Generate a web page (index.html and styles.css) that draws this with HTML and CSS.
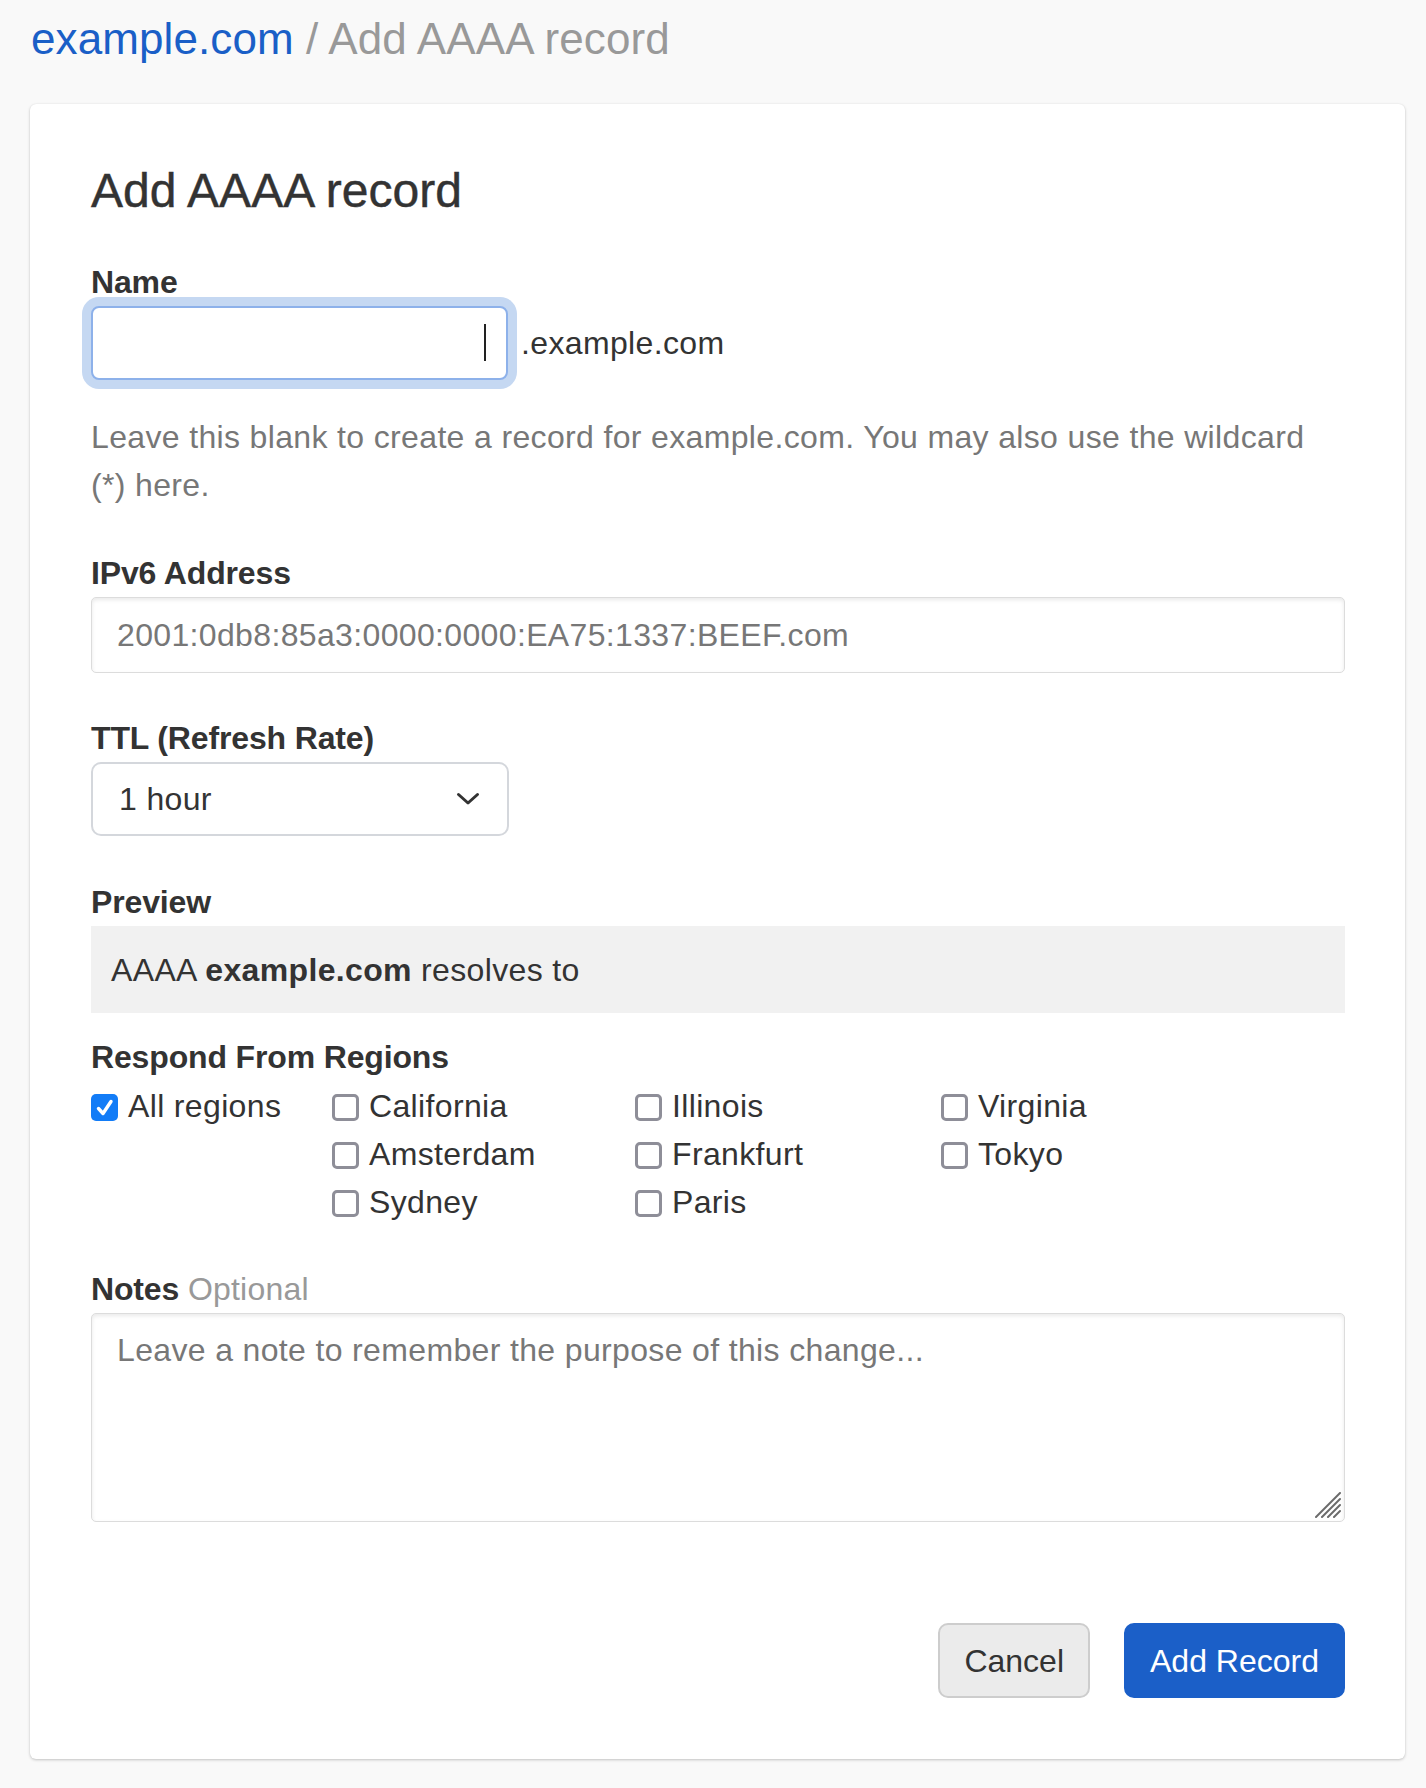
FILE: index.html
```html
<!DOCTYPE html>
<html lang="en">
<head>
<meta charset="utf-8">
<title>Add AAAA record</title>
<link rel="stylesheet" href="styles.css">
</head>
<body>
  <nav class="crumbs">
    <a class="crumb-link" href="#">example.com</a>
    <span class="crumb-rest">/ Add AAAA record</span>
  </nav>

  <main class="card">
    <h1 class="card-title">Add AAAA record</h1>

    <div class="field field-name">
      <label class="field-label" for="name">Name</label>
      <div class="name-row">
        <div class="name-input-wrap">
          <input id="name" class="input input-focus" type="text">
          <span class="caret"></span>
        </div>
        <span class="name-suffix">.example.com</span>
      </div>
      <p class="help">Leave this blank to create a record for example.com. You may also use the wildcard (*) here.</p>
    </div>

    <div class="field field-ip">
      <label class="field-label" for="ip">IPv6 Address</label>
      <input id="ip" class="input input-plain" type="text" placeholder="2001:0db8:85a3:0000:0000:EA75:1337:BEEF.com">
    </div>

    <div class="field field-ttl">
      <label class="field-label" for="ttl">TTL (Refresh Rate)</label>
      <div class="select-wrap">
        <select id="ttl" class="select">
          <option>1 hour</option>
        </select>
        <svg class="chevron" width="24" height="14" viewBox="0 0 24 14" aria-hidden="true">
          <path d="M2.5 2.5 L12 11 L21.5 2.5" fill="none" stroke="#333" stroke-width="3" stroke-linecap="round" stroke-linejoin="round"/>
        </svg>
      </div>
    </div>

    <div class="field field-preview">
      <div class="field-label">Preview</div>
      <div class="preview">AAAA <strong>example.com</strong> resolves to</div>
    </div>

    <div class="field field-regions">
      <div class="field-label">Respond From Regions</div>
      <div class="regions">
        <label class="region region-all">
          <span class="box box-checked">
            <svg width="27" height="27" viewBox="0 0 27 27" aria-hidden="true">
              <path d="M7.5 14.5 L12 19.5 L20 7.5" fill="none" stroke="#fff" stroke-width="3.4" stroke-linecap="round" stroke-linejoin="round"/>
            </svg>
          </span>
          All regions
        </label>
        <div class="region-grid">
          <label class="region"><span class="box"></span>California</label>
          <label class="region"><span class="box"></span>Illinois</label>
          <label class="region"><span class="box"></span>Virginia</label>
          <label class="region"><span class="box"></span>Amsterdam</label>
          <label class="region"><span class="box"></span>Frankfurt</label>
          <label class="region"><span class="box"></span>Tokyo</label>
          <label class="region"><span class="box"></span>Sydney</label>
          <label class="region"><span class="box"></span>Paris</label>
        </div>
      </div>
    </div>

    <div class="field field-notes">
      <label class="field-label" for="notes">Notes <span class="optional">Optional</span></label>
      <div class="textarea-wrap">
        <textarea id="notes" class="textarea" placeholder="Leave a note to remember the purpose of this change..."></textarea>
        <svg class="resizer" width="26" height="26" viewBox="0 0 26 26" aria-hidden="true">
          <g stroke="#6b6b6b" stroke-width="2" stroke-linecap="round">
            <line x1="1" y1="25" x2="25" y2="1"/>
            <line x1="7" y1="25" x2="25" y2="7"/>
            <line x1="13" y1="25" x2="25" y2="13"/>
            <line x1="19" y1="25" x2="25" y2="19"/>
          </g>
        </svg>
      </div>
    </div>

    <div class="actions">
      <button class="btn btn-cancel" type="button">Cancel</button>
      <button class="btn btn-primary" type="button">Add Record</button>
    </div>
  </main>
</body>
</html>
```

FILE: styles.css
```css
* {
  box-sizing: border-box;
}

body {
  margin: 0;
  padding: 12px 21px 29px 30px;
  background: #f9f9f9;
  font-family: "Liberation Sans", Arial, Helvetica, sans-serif;
  font-size: 32px;
  line-height: 48px;
  letter-spacing: 0.35px;
  color: #333;
}

.crumbs {
  font-size: 44px;
  line-height: 53px;
  letter-spacing: 0.1px;
  margin: 0 0 39px;
  padding-left: 1px;
}

.crumb-link {
  color: #1a5fc7;
  text-decoration: none;
}

.crumb-rest {
  color: #999;
}

.card {
  background: #fff;
  border-radius: 6px;
  box-shadow: 0 1px 3px rgba(0, 0, 0, 0.22), 0 0 1px rgba(0, 0, 0, 0.08);
  padding: 58px 60px 61px 61px;
}

.card-title {
  margin: 0;
  font-size: 48px;
  line-height: 58px;
  font-weight: 400;
  letter-spacing: 0;
  color: #333;
  -webkit-text-stroke: 0.45px #333;
}

.field {
  margin-top: 40px;
}

.field-name {
  margin-top: 38px;
}

.field-ttl {
  margin-top: 41px;
}

.field-preview {
  margin-top: 42px;
}

.field-regions {
  margin-top: 20px;
}

.field-notes {
  margin-top: 39px;
}

.field-label {
  display: block;
  font-weight: 700;
  line-height: 48px;
  letter-spacing: -0.15px;
  color: #333;
}

.optional {
  font-weight: 400;
  letter-spacing: 0.2px;
  color: #999;
}

.name-row {
  display: flex;
  align-items: center;
}

.name-input-wrap {
  position: relative;
  width: 417px;
  flex: none;
}

.input {
  display: block;
  width: 100%;
  font: inherit;
  letter-spacing: inherit;
  color: #333;
  background: #fff;
  outline: none;
}

.input-focus {
  height: 74px;
  border: 2px solid #8db1ea;
  border-radius: 8px;
  box-shadow: 0 0 0 9px #c5d8f2;
  padding: 0 24px;
}

.caret {
  position: absolute;
  left: 393px;
  top: 18px;
  width: 2px;
  height: 37px;
  background: #222;
}

.name-suffix {
  margin-left: 13px;
  color: #333;
}

.help {
  margin: 33px 0 0;
  color: #777;
}

.input-plain {
  height: 76px;
  border: 1px solid #dcdcdc;
  border-radius: 5px;
  box-shadow: inset 0 2px 4px rgba(0, 0, 0, 0.09);
  padding: 0 25px;
}

.input-plain::placeholder,
.textarea::placeholder {
  color: #777;
  opacity: 1;
}

.select-wrap {
  position: relative;
  width: 418px;
}

.select {
  display: block;
  width: 100%;
  height: 74px;
  -webkit-appearance: none;
  appearance: none;
  border: 2px solid #d4d7dc;
  border-radius: 10px;
  background: #fff;
  font: inherit;
  letter-spacing: inherit;
  color: #333;
  padding: 0 26px;
  outline: none;
}

.chevron {
  position: absolute;
  left: 365px;
  top: 30px;
  pointer-events: none;
}

.preview {
  background: #f1f1f1;
  padding: 20px 20px 19px;
  color: #333;
}

.preview strong {
  font-weight: 700;
}

.regions {
  display: flex;
  margin-top: 1px;
}

.region-all {
  width: 241px;
  flex: none;
}

.region-grid {
  display: grid;
  grid-template-columns: 303px 306px 1fr;
}

.region {
  display: flex;
  align-items: center;
  gap: 10px;
  height: 48px;
  color: #333;
}

.box {
  width: 27px;
  height: 27px;
  flex: none;
  border: 3px solid #8e8e98;
  border-radius: 5px;
  background: #fff;
  margin-top: 3px;
}

.box-checked {
  border: 0;
  background: #127cf7;
  display: flex;
}

.textarea-wrap {
  position: relative;
}

.textarea {
  display: block;
  width: 100%;
  height: 209px;
  font: inherit;
  letter-spacing: inherit;
  color: #333;
  border: 1px solid #dcdcdc;
  border-radius: 5px;
  box-shadow: inset 0 2px 4px rgba(0, 0, 0, 0.09);
  padding: 12px 25px;
  resize: none;
  outline: none;
  background: #fff;
}

.resizer {
  position: absolute;
  right: 4px;
  bottom: 4px;
  pointer-events: none;
}

.actions {
  display: flex;
  justify-content: flex-end;
  gap: 34px;
  margin-top: 101px;
}

.btn {
  height: 75px;
  padding: 0 24px;
  font: inherit;
  letter-spacing: 0;
  border-radius: 10px;
  cursor: pointer;
}

.btn-cancel {
  background: #ebebeb;
  border: 2px solid #cdcdcd;
  color: #333;
}

.btn-primary {
  background: #1b5fc8;
  border: 2px solid #1b5fc8;
  color: #fff;
}
```
